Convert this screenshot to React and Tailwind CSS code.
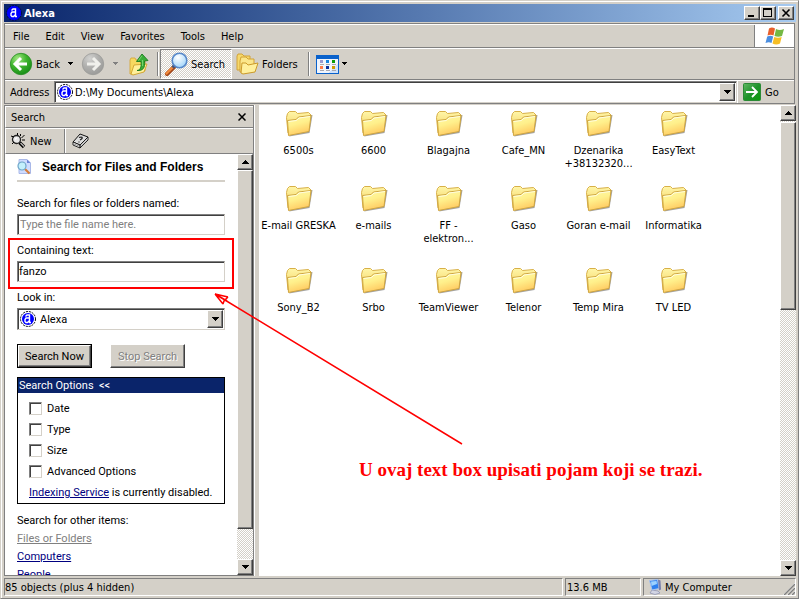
import { useState } from "react";

const raised = "border border-t-white border-l-white border-r-[#404040] border-b-[#404040] bg-[#d4d0c8] shadow-[inset_-1px_-1px_#808080]";
const sunken = "border border-t-[#808080] border-l-[#808080] border-r-[#d4d0c8] border-b-[#d4d0c8] bg-white shadow-[inset_1px_1px_#404040]";
const dither = "bg-[conic-gradient(#fff_25%,#d4d0c8_0_50%,#fff_0_75%,#d4d0c8_0)] bg-[length:2px_2px]";

const menus = ["File", "Edit", "View", "Favorites", "Tools", "Help"];

const folders = [
    ["6500s"], ["6600"], ["Blagajna"], ["Cafe_MN"], ["Dzenarika", "+38132320..."], ["EasyText"],
    ["E-mail GRESKA"], ["e-mails"], ["FF -", "elektron..."], ["Gaso"], ["Goran e-mail"], ["Informatika"],
    ["Sony_B2"], ["Srbo"], ["TeamViewer"], ["Telenor"], ["Temp Mira"], ["TV LED"],
];

/* Icons */
function AlexaIcon({ dark }) {
    return (
        <svg width="16" height="16" viewBox="0 0 16 16" className="shrink-0">
            <circle cx="8" cy="8" r="7.5" fill={dark ? "#00f" : "#fff"} stroke={dark ? "#001040" : "#001"} strokeDasharray="2 1" />
            <circle cx="8" cy="8" r="6" fill="#00f" />
            <path d="M5.500 5.500L7 4h2.500v7.500h1.500M9 7H6L5 8.500v2L6 11.500h1.500L9 10" fill="none" stroke="#fff" strokeWidth="1.400" />
        </svg>
    );
}

function Caret({ gray }) {
    return (
        <svg width="7" height="4" viewBox="0 0 7 4" shapeRendering="crispEdges" className="shrink-0">
            <path d="M1 0h5v1H5v1H4v1H3V2H2V1H1z" fill={gray ? "#808080" : "#000"} />
        </svg>
    );
}

function ScrollArrow({ up }) {
    return (
        <svg width="7" height="4" viewBox="0 0 7 4" shapeRendering="crispEdges">
            <path d={up ? "M3 0h1v1h1v1h1v1h1v1H0V3h1V2h1V1h1z" : "M0 0h7v1H6v1H5v1H4v1H3V3H2V2H1V1H0z"} fill="#000" />
        </svg>
    );
}

function NavIcon({ forward }) {
    return (
        <svg width="24" height="24" viewBox="0 0 24 24" className="shrink-0">
            <defs>
                <radialGradient id={forward ? "navGray" : "navGreen"} cx=".35" cy=".25" r=".8">
                    <stop offset="0" stopColor={forward ? "#d2d2d0" : "#a4e884"} />
                    <stop offset=".5" stopColor={forward ? "#b0b0ae" : "#3fb42e"} />
                    <stop offset="1" stopColor={forward ? "#9a9a98" : "#168c16"} />
                </radialGradient>
            </defs>
            <circle cx="12" cy="12" r="10.700" fill={forward ? "url(#navGray)" : "url(#navGreen)"} stroke={forward ? "#9a9a98" : "#278c22"} strokeWidth=".8" />
            <path
                d={forward ? "M6 12h11M12 6l6 6-6 6" : "M18 12H7M12 6l-6 6 6 6"}
                fill="none" stroke={forward ? "#f0f0ec" : "#fff"} strokeWidth="3"
            />
        </svg>
    );
}

function UpFolderIcon() {
    return (
        <svg width="20" height="24" viewBox="0 0 20 24" className="shrink-0">
            <path d="M1 8l1-2h4l1 2h9v11L4 22H1z" fill="#f6d860" stroke="#d6a83a" strokeWidth=".9" />
            <path d="M2 22l3-9 13-1-3 8-11 3z" fill="#fff09a" stroke="#cfa22a" strokeWidth=".9" />
            <path d="M8 18.500c3.500-.5 4.500-3 4-9H7.500L13 2l6 6.500-3.500.5c.8 7-1.500 10-7.500 9.500z" fill="#3aae3a" stroke="#187a1c" strokeWidth=".9" />
            <path d="M9.500 8.500L13 3.700M13.500 8v6" fill="none" stroke="#86dc7c" strokeWidth=".8" />
        </svg>
    );
}

function SearchIcon() {
    return (
        <svg width="24" height="24" viewBox="0 0 24 24" className="shrink-0">
            <defs>
                <radialGradient id="lens" cx=".4" cy=".3" r=".75">
                    <stop offset="0" stopColor="#fff" />
                    <stop offset="1" stopColor="#9cd3fa" />
                </radialGradient>
            </defs>
            <path d="M3 22l7-7" stroke="#a4491c" strokeWidth="4" strokeLinecap="round" />
            <path d="M2.500 21.500l6.500-6.500" stroke="#f28a3c" strokeWidth="2.400" strokeLinecap="round" />
            <path d="M8.500 15.500l2.500-2.500" stroke="#44557a" strokeWidth="3" />
            <circle cx="15.500" cy="8.500" r="7.300" fill="url(#lens)" stroke="#5687c8" strokeWidth="1.600" />
        </svg>
    );
}

function FoldersIcon() {
    return (
        <svg width="24" height="24" viewBox="0 0 24 24" className="shrink-0">
            <path d="M2 4l1-2h4l2 2h6v11L4 18H2z" fill="#f6d96c" stroke="#d2a236" />
            <path d="M5 9l1-4h5l2 2h6v10L7 20H5z" fill="#fbe68a" stroke="#d2a236" />
            <path d="M6 21l1-10h4l2 2 10-2-3 9-12 2z" fill="#fff09c" stroke="#cb9a2a" />
        </svg>
    );
}

function ViewsIcon() {
    return (
        <svg width="23" height="19" viewBox="0 0 23 19" shapeRendering="crispEdges" className="shrink-0">
            <rect width="23" height="19" rx="1" fill="#0a62cc" />
            <rect x="1" y="4" width="21" height="14" fill="#f0f5fd" />
            <path d="M12 18L22 8v10z" fill="#cfe2fb" />
            <path d="M4 5h3v3H4z" fill="#9a99d0" />
            <path d="M10 5h3v3h-3z" fill="#1683e0" />
            <path d="M16 5h3v3h-3z" fill="#0a9c0a" />
            <path d="M4 11h3v3H4z" fill="#ff7a4a" />
            <path d="M10 11h3v3h-3z" fill="#0b2f9c" />
            <path d="M16 11h3v3h-3z" fill="#cf9a00" />
            <path d="M4 9h4v1H4zM10 9h4v1h-4zM16 9h4v1h-4zM4 15h4v1H4zM10 15h4v1h-4zM16 15h4v1h-4z" fill="#a8a8b0" />
        </svg>
    );
}

function WindowsLogo() {
    return (
        <svg width="20" height="18" viewBox="0 0 20 18">
            <path d="M4 1.500C6.500 0 8 .5 10 1.500L8.500 8.500C6.500 7.500 5 7.500 2.500 8.500z" fill="#e8602c" />
            <path d="M11 2c2.500 1.300 5 1.300 8 0l-2 7c-2.500 1-5 1-7.500 0z" fill="#74b843" />
            <path d="M2.200 9.500c2.500-1 4-1 6 0L6.500 16c-2-1-3.500-1-6 0z" fill="#4b8ee0" />
            <path d="M9.200 10c2.500 1 5 1 7.500 0L15 16.500c-2.500 1.300-5 1.300-7.500 0z" fill="#f6be26" />
        </svg>
    );
}

function GoIcon() {
    return (
        <svg width="18" height="18" viewBox="0 0 18 18" className="shrink-0">
            <defs>
                <linearGradient id="go" x2="1" y2="1">
                    <stop offset="0" stopColor="#62b864" />
                    <stop offset=".5" stopColor="#1e922a" />
                    <stop offset="1" stopColor="#0b9d0b" />
                </linearGradient>
            </defs>
            <rect x=".5" y=".5" width="17" height="17" rx="1" fill="url(#go)" stroke="#2a8a35" />
            <path d="M3 9h11M9 4l5 5-5 5" fill="none" stroke="#fff" strokeWidth="1.800" />
        </svg>
    );
}

function NewSearchIcon() {
    return (
        <svg width="16" height="16" viewBox="0 0 16 16" className="shrink-0">
            <path d="M8.500 9.500l4.500 4.500" stroke="#000" strokeWidth="3.400" />
            <path d="M9.500 10l3.500 3.500" stroke="#bbb" strokeWidth="1.200" />
            <circle cx="5.500" cy="6.500" r="4" fill="#e8e8e8" stroke="#222" strokeWidth="1.300" />
            <path d="M0 3l3 1M9.500 1v2M13.500 2l-3 3M11 7h3M6.500 0v2M1 11l2-2" stroke="#000" />
            <path d="M4 6.500l2-2" stroke="#fff" strokeWidth="1.200" />
        </svg>
    );
}

function BookIcon() {
    return (
        <svg width="17" height="16" viewBox="0 0 17 16" className="shrink-0">
            <path d="M1 9L8 1l8 3-8 8z" fill="#ddd" stroke="#111" />
            <path d="M1 9v3l7 3v-3zM8 15l8-8V4l-8 8z" fill="#fff" stroke="#111" strokeWidth=".9" />
            <path d="M2 11l6 2.500L15.500 6" fill="none" stroke="#777" strokeWidth=".8" />
            <path d="M7 4.500c3-1 4 0 2.500 1.500L8 7M7 8.500v1" fill="none" stroke="#222" strokeWidth="1.200" />
        </svg>
    );
}

function SearchPageIcon() {
    return (
        <svg width="14" height="16" viewBox="0 0 14 16" className="shrink-0">
            <path d="M2 .5h8L13.500 4v10.500H2z" fill="#cfdcff" stroke="#a9b8e8" />
            <path d="M10 .5V4h3.500z" fill="#6c86d8" />
            <path d="M8 10l4.500 4.500" stroke="#d77e3c" strokeWidth="2.200" />
            <circle cx="5" cy="7" r="4" fill="#c4f0fc" stroke="#6fa5c8" strokeWidth="1.200" />
        </svg>
    );
}

function FolderIcon() {
    return (
        <svg width="28" height="28" viewBox="0 0 28 28">
            <defs>
                <linearGradient id="folderBack" x2="0" y2="1">
                    <stop offset="0" stopColor="#fff6a8" />
                    <stop offset="1" stopColor="#f3cd5a" />
                </linearGradient>
                <linearGradient id="folder" x2=".35" y2="1">
                    <stop offset="0" stopColor="#fffaa8" />
                    <stop offset=".5" stopColor="#fff08c" />
                    <stop offset="1" stopColor="#ffcb62" />
                </linearGradient>
            </defs>
            <path d="M4 27.500l20.500-3.500 3-18-3 0z" fill="#666" opacity=".6" />
            <path d="M1.500 8.500L2.500 4.500l2-2 6 0 2 2 11-1 2.500 2.500-2 12L3 24z" fill="url(#folderBack)" stroke="#d8b048" />
            <path d="M3.500 26.500L2.500 11.500l8.500-1 2.500-2.500L26 6.500 24 22.500z" fill="url(#folder)" stroke="#cfa540" />
            <path d="M3.500 12.500l8-1 2.500-2.500 11-1.500" fill="none" stroke="#fffee0" />
        </svg>
    );
}

function ComputerIcon() {
    return (
        <svg width="14" height="16" viewBox="0 0 14 16" className="shrink-0">
            <path d="M4 11l6 1 2 2-5 1.500-5-1.500z" fill="#d3d5e4" stroke="#9295b4" strokeWidth=".8" />
            <path d="M1.500 1.500l8-1 1.500 9-7 1.500z" fill="#2f80ee" stroke="#a9c3ee" />
            <path d="M3 2.500l5.500-.5.500 3-5.500 2z" fill="#9ed2ff" />
            <path d="M10 .5l2.500 1 .5 9-2 1z" fill="#777fac" />
        </svg>
    );
}

/* Scrollbar, thumb and track sizes given as flex classes */
function Scrollbar({ thumb, track }) {
    return (
        <div className={`flex w-4 shrink-0 flex-col ${dither}`}>
            <button aria-label="Scroll up" className={`flex h-4 items-center justify-center ${raised}`}><ScrollArrow up /></button>
            <div className={`${raised} ${thumb}`} />
            <div className={track} />
            <button aria-label="Scroll down" className={`flex h-4 items-center justify-center ${raised}`}><ScrollArrow /></button>
        </div>
    );
}

function Separator() {
    return <div className="h-6 w-[2px] shrink-0 border-l border-l-[#808080] bg-white" />;
}

function TitleBar() {
    return (
        <div className="flex h-[18px] items-center bg-linear-to-r from-[#0a246a] to-[#a6caf0] px-[2px] text-white">
            <AlexaIcon dark />
            <h1 className="ml-[2px] flex-1 font-bold">Alexa</h1>
            <button aria-label="Minimize" className={`h-[14px] w-4 ${raised}`}>
                <svg width="14" height="12" shapeRendering="crispEdges"><path d="M3 8h6v2H3z" /></svg>
            </button>
            <button aria-label="Maximize" className={`h-[14px] w-4 ${raised}`}>
                <svg width="14" height="12" shapeRendering="crispEdges"><path d="M2 1h9v9H2zM3 3v6h7V3z" fillRule="evenodd" /></svg>
            </button>
            <button aria-label="Close" className={`ml-[2px] h-[14px] w-4 ${raised}`}>
                <svg width="14" height="12"><path d="M3.500 2.500l7 7M10.500 2.500l-7 7" stroke="#000" strokeWidth="1.600" /></svg>
            </button>
        </div>
    );
}

function Toolbar() {
    return (
        <div className="flex h-[31px] items-center border-t border-t-white pl-1">
            <button className="flex items-center gap-[3px]"><NavIcon /> Back</button>
            <button aria-label="Back history" className="ml-[7px]"><Caret /></button>
            <button aria-label="Forward" className="ml-[7px]"><NavIcon forward /></button>
            <button aria-label="Forward history" className="ml-[7px]"><Caret gray /></button>
            <button aria-label="Up" className="mr-2 ml-[10px]"><UpFolderIcon /></button>
            <Separator />
            <button className={`ml-px flex h-[30px] w-[72px] items-center gap-[3px] border border-t-[#808080] border-l-[#808080] border-r-white border-b-white pl-[3px] ${dither}`}>
                <SearchIcon /> Search
            </button>
            <button className="ml-[3px] flex items-center gap-[3px]"><FoldersIcon /> Folders</button>
            <div className="ml-[10px] flex items-center gap-[6px]">
                <Separator />
                <button aria-label="Views" className="flex items-center gap-[2px]"><ViewsIcon /><Caret /></button>
            </div>
        </div>
    );
}

function AddressBar() {
    return (
        <div className="flex h-[24px] items-center border-t border-b border-t-white border-b-[#808080]">
            <label htmlFor="address" className="w-[49px] pl-[5px]">Address</label>
            <div className={`flex h-[22px] flex-1 items-center pr-px pl-[2px] ${sunken}`}>
                <AlexaIcon />
                <input id="address" defaultValue="D:\My Documents\Alexa" className="ml-[2px] min-w-0 flex-1 outline-none" />
                <button aria-label="Show addresses" className={`flex h-[18px] w-4 items-center justify-center ${raised}`}><ScrollArrow /></button>
            </div>
            <button className="flex h-full w-[57px] items-center gap-1 border-l border-l-white pl-[5px]"><GoIcon /> Go</button>
        </div>
    );
}

function SearchPane() {
    const [fileName, setFileName] = useState("");
    const [text, setText] = useState("fanzo");

    return (
        <aside className="flex w-[250px] shrink-0 flex-col border border-[#808080]">
            <div className="flex h-[22px] items-center border-t border-l border-b border-t-white border-l-white border-b-[#808080] pr-[7px] pl-[5px]">
                <h2 className="flex-1">Search</h2>
                <button aria-label="Close search">
                    <svg width="8" height="8"><path d="M.5.5l7 7M7.500.5l-7 7" stroke="#000" strokeWidth="1.500" /></svg>
                </button>
            </div>
            <div className="flex h-[26px] items-center border-t border-l border-b border-t-white border-l-white border-b-[#808080] pl-[5px]">
                <button className="mr-3 flex items-center gap-[3px]"><NewSearchIcon /> New</button>
                <Separator />
                <button aria-label="Help" className="ml-[6px]"><BookIcon /></button>
            </div>

            <div className="flex min-h-0 flex-1 border-l border-l-white bg-white">
                <form className="min-w-0 flex-1 overflow-hidden pr-3 pl-[11px] font-[Roboto,sans-serif]" onSubmit={(e) => e.preventDefault()}>
                    <div className="flex h-7 items-center gap-[11px] border-b-2 border-b-[#d4d0c8]">
                        <SearchPageIcon />
                        <h3 className="font-['Liberation_Sans',sans-serif] text-[12px] font-bold whitespace-nowrap">Search for Files and Folders</h3>
                    </div>

                    <label htmlFor="fileName" className="mt-[14px] mb-[3px] block leading-[15px]">Search for files or folders named:</label>
                    <input
                        id="fileName"
                        value={fileName}
                        onChange={(e) => setFileName(e.target.value)}
                        placeholder="Type the file name here."
                        className={`block h-[21px] w-full px-[2px] placeholder:text-[#808080] ${sunken}`}
                    />

                    <div className="relative mt-2 mb-2">
                        <label htmlFor="contains" className="mb-[3px] block leading-[15px]">Containing text:</label>
                        <input
                            id="contains"
                            value={text}
                            onChange={(e) => setText(e.target.value)}
                            className={`block h-[21px] w-full px-px ${sunken}`}
                        />
                        <div className="pointer-events-none absolute -inset-x-[9px] -top-[5px] -bottom-[7px] border-2 border-[#f00]" />
                    </div>

                    <label htmlFor="lookIn" className="mb-[3px] block leading-[15px]">Look in:</label>
                    <div className={`relative flex h-[22px] items-center pl-[2px] ${sunken}`}>
                        <AlexaIcon />
                        <select id="lookIn" className="flex-1 appearance-none pl-1 outline-none">
                            <option>Alexa</option>
                        </select>
                        <span className={`pointer-events-none absolute right-px flex h-[18px] w-4 items-center justify-center ${raised}`}><ScrollArrow /></span>
                    </div>

                    <div className="mt-[14px] flex gap-[18px]">
                        <button className="h-6 w-[75px] border border-black">
                            <span className={`flex h-full items-center justify-center whitespace-nowrap ${raised}`}>Search Now</span>
                        </button>
                        <button disabled className={`h-6 w-[75px] whitespace-nowrap text-[#808080] text-shadow-[1px_1px_#fff] ${raised}`}>Stop Search</button>
                    </div>

                    <section className="mt-[9px] h-[127px] border border-black">
                        <button className="block h-[15px] w-full bg-[#0a246a] pl-px text-left leading-[15px] text-white">Search Options &nbsp;&lt;&lt;</button>
                        <div className="flex flex-col gap-[6px] pt-2 pl-[11px]">
                            {["Date", "Type", "Size", "Advanced Options"].map((option) => (
                                <label key={option} className="flex h-[15px] items-center gap-[5px]">
                                    <input type="checkbox" className={`size-[13px] appearance-none checked:bg-[#0a246a] ${sunken}`} />
                                    {option}
                                </label>
                            ))}
                            <p className="leading-[15px] whitespace-nowrap">
                                <a href="#indexing" className="text-[#000080] underline">Indexing Service</a> is currently disabled.
                            </p>
                        </div>
                    </section>

                    <p className="mt-2 leading-[18px]">Search for other items:</p>
                    <a href="#files" className="block leading-[18px] text-[#808080] underline">Files or Folders</a>
                    <a href="#computers" className="block leading-[18px] text-[#000080] underline">Computers</a>
                    <a href="#people" className="block leading-[18px] text-[#000080] underline">People</a>
                </form>
                <Scrollbar thumb="grow-[12]" track="grow" />
            </div>
        </aside>
    );
}

export default function App() {
    return (
        <div className="relative flex h-screen flex-col overflow-hidden border border-t-[#d4d0c8] border-l-[#d4d0c8] border-r-[#808080] border-b-[#808080] bg-[#d4d0c8] pt-[3px] pr-[2px] pb-[2px] pl-[3px] font-['DejaVu_Sans_Condensed','DejaVu_Sans',sans-serif] text-[11px] leading-[13px] text-black shadow-[inset_1px_1px_#fff]">
            <TitleBar />

            <header className="mt-px mr-px border-t border-r border-l border-[#808080]">
                <div className="border-t border-white">
                    <nav className="flex h-[23px] items-stretch border-b border-b-[#808080]">
                        <div className="flex flex-1 items-center gap-4 pl-2">
                            {menus.map((menu) => <button key={menu}>{menu}</button>)}
                        </div>
                        <div className="flex w-10 items-center justify-center border-l border-l-[#808080] bg-white"><WindowsLogo /></div>
                    </nav>
                    <Toolbar />
                    <div className="h-px bg-[#808080]" />
                    <AddressBar />
                </div>
            </header>

            <div className="mt-px flex min-h-0 flex-1">
                <SearchPane />
                <div className="w-[5px] shrink-0 border-l border-l-white" />
                <main className="grid min-w-0 flex-1 grid-cols-[repeat(auto-fill,75px)] grid-rows-[75px_82px_75px] content-start overflow-hidden bg-white pt-1 pl-[2px]">
                    {folders.map((lines) => (
                        <button key={lines[0]} className="flex flex-col items-center justify-start whitespace-nowrap">
                            <FolderIcon />
                            <span className="mt-[7px]">
                                {lines.map((line) => <span key={line} className="block">{line}</span>)}
                            </span>
                        </button>
                    ))}
                </main>
                <Scrollbar thumb="mt-px grow-[187]" track="grow-[252]" />
            </div>

            <footer className="flex gap-[2px] pt-[2px]">
                <div className="flex h-[18px] flex-1 items-center border border-t-[#808080] border-l-[#808080] border-r-white border-b-white">85 objects (plus 4 hidden)</div>
                <div className="flex h-[18px] w-[76px] items-center border border-t-[#808080] border-l-[#808080] border-r-white border-b-white pl-px">13.6 MB</div>
                <div className="flex h-[18px] w-[153px] items-center gap-[3px] border border-t-[#808080] border-l-[#808080] border-r-white border-b-white pl-1">
                    <ComputerIcon />
                    <span className="flex-1">My Computer</span>
                    <svg width="12" height="12" className="self-end">
                        <path d="M0 12L12 0M4 12l8-8M8 12l4-4" stroke="#fff" />
                        <path d="M1 12L12 1M5 12l7-7M9 12l3-3" stroke="#808080" strokeWidth="1.500" />
                    </svg>
                </div>
            </footer>

            {/* Note drawn over the window */}
            <svg width="250" height="155" viewBox="0 0 250 155" className="pointer-events-none absolute top-[290px] left-[212px]">
                <path d="M2 3l247 150M2 3l13 3M2 3l8 10M2 3l12 7M15 6l-4 4-1 3" fill="none" stroke="#f00" strokeWidth="1.500" />
            </svg>
            <p className="pointer-events-none absolute top-[458px] left-[358px] font-['Liberation_Serif',serif] text-[19px] leading-[22px] font-bold whitespace-nowrap text-[#f00]">
                U ovaj text box upisati pojam koji se trazi.
            </p>
        </div>
    );
}
